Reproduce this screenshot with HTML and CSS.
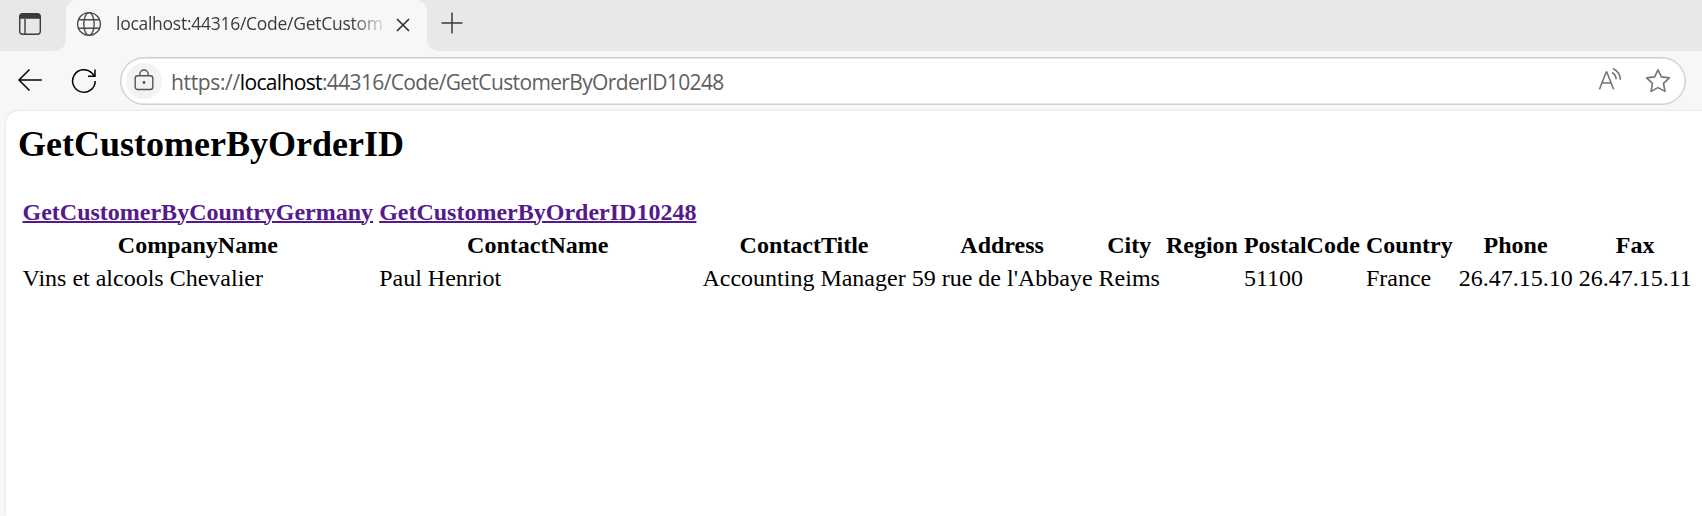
FILE: index.html
```html
<!DOCTYPE html>
<html lang="en">
<head>
<meta charset="utf-8">
<title>GetCustomerByOrderID</title>
<link rel="stylesheet" href="styles.css">
</head>
<body>
<div class="browser">
  <header class="tab-strip">
    <div class="tab-actions">
      <svg width="24" height="24" viewBox="0 0 24 24" fill="none" stroke="#3b3b3b" stroke-width="1.4"><rect x="1.7" y="1.7" width="20.6" height="20.6" rx="3.2"/><path d="M2 6V5a3 3 0 0 1 3-3h14a3 3 0 0 1 3 3v1z" fill="#3b3b3b"/><path d="M7 7v15"/></svg>
    </div>
    <div class="tab">
      <svg class="globe" width="26" height="26" viewBox="0 0 26 26" fill="none" stroke="#4b4b4b" stroke-width="1.4"><circle cx="13" cy="13" r="11.4"/><ellipse cx="13" cy="13" rx="5.2" ry="11.4"/><path d="M2.5 8.7h21M2.5 17.3h21"/></svg>
      <span class="tab-title">localhost:44316/Code/GetCustom</span>
      <svg class="close" width="14" height="14" viewBox="0 0 14 14" fill="none" stroke="#333" stroke-width="1.7"><path d="M1 1l12 12M13 1L1 13"/></svg>
    </div>
    <div class="new-tab">
      <svg width="22" height="22" viewBox="0 0 22 22" fill="none" stroke="#3b3b3b" stroke-width="1.5"><path d="M11 .5v21M.5 11h21"/></svg>
    </div>
  </header>
  <nav class="toolbar">
    <svg class="back" width="26" height="24" viewBox="0 0 26 24" fill="none" stroke="#000" stroke-width="1.5"><path d="M11.5 1.5L1 12l10.5 10.5M1 12H23.8"/></svg>
    <svg class="reload" width="26" height="26" viewBox="0 0 26 26" fill="none" stroke="#000" stroke-width="1.5"><path d="M24.2 13a11.3 11.3 0 1 1-3.3-8l2.6 3M24 1.5v6.7h-7"/></svg>
    <div class="address">
      <span class="lock"><svg width="20" height="22" viewBox="0 0 20 22" fill="none" stroke="#555" stroke-width="1.4"><rect x="1.2" y="6.7" width="17.6" height="13.8" rx="2.5"/><path d="M5.8 6.5V5.2a4.2 4.2 0 0 1 8.4 0v1.3"/><circle cx="10" cy="13.5" r="1.4" fill="#555" stroke="none"/></svg></span>
      <span class="url"><span class="scheme">https://</span><span class="host">localhost</span>:44316/Code/GetCustomerByOrderID10248</span>
      <svg class="read" width="24" height="24" viewBox="0 0 24 24" fill="none" stroke="#757575" stroke-width="1.6"><path d="M1.5 22.2L8.2 5h.6l6.8 17.2M3.9 16h9.2M14 5.5c2.5 1.4 4 4 4.2 6.8M15 1.5c4.4 2.2 7.2 6.4 7.4 11.3"/></svg>
      <svg class="star" width="26" height="26" viewBox="0 0 26 26" fill="none" stroke="#757575" stroke-width="1.6" stroke-linejoin="round"><path d="M13 1.8l3.4 7.1 8 1-5.9 5.5 1.5 8L13 19.6l-7 3.8 1.5-8L1.6 9.9l8-1z"/></svg>
    </div>
  </nav>
  <main class="page">
    <h2>GetCustomerByOrderID</h2>
    <table class="customers">
      <tbody>
        <tr><th><a href="#">GetCustomerByCountryGermany</a></th><th><a href="#">GetCustomerByOrderID10248</a></th></tr>
        <tr><th>CompanyName</th><th>ContactName</th><th>ContactTitle</th><th>Address</th><th>City</th><th>Region</th><th>PostalCode</th><th>Country</th><th>Phone</th><th>Fax</th></tr>
        <tr><td>Vins et alcools Chevalier</td><td>Paul Henriot</td><td>Accounting Manager</td><td>59 rue de l'Abbaye</td><td>Reims</td><td></td><td>51100</td><td>France</td><td>26.47.15.10</td><td>26.47.15.11</td></tr>
      </tbody>
    </table>
  </main>
</div>
</body>
</html>
```
FILE: styles.css
```css
* { box-sizing: border-box; }
body { margin: 0; overflow: hidden; background: #f7f7f7; }
svg { display: block; flex: none; }
.browser { height: 516px; display: flex; flex-direction: column; }

.tab-strip { height: 51px; display: flex; flex: none; background: #f7f7f7; }
.tab-actions { width: 66px; padding: 12px 0 0 18px; background: #e8e8e8; border-bottom-right-radius: 12px; }
.tab {
  width: 361px; display: flex; align-items: center; padding: 0 0 3px 10px;
  background: radial-gradient(circle at 12px 12px, #f7f7f7 12px, transparent 12.5px) 0 0 / 12px 12px no-repeat,
    radial-gradient(circle at 0 12px, #f7f7f7 12px, transparent 12.5px) 100% 0 / 12px 12px no-repeat,
    linear-gradient(#f7f7f7, #f7f7f7) 12px 0 / 337px 12px no-repeat,
    linear-gradient(#f7f7f7, #f7f7f7) 0 12px no-repeat, #e8e8e8;
}
.tab-title {
  width: 268px; margin: -2px 0 0 14px; overflow: hidden; white-space: nowrap;
  font: 17.5px/26px "Open Sans", "Noto Sans", sans-serif; letter-spacing: -0.27px; color: #3b3b3b;
  -webkit-mask-image: linear-gradient(90deg, #000 235px, transparent 272px);
  mask-image: linear-gradient(90deg, #000 235px, transparent 272px);
}
.close { margin: 2px 0 0 12px; }
.new-tab { flex: 1; padding: 12px 0 0 14px; background: #e8e8e8; border-bottom-left-radius: 12px; }

.toolbar { height: 60px; flex: none; display: flex; align-items: center; padding: 0 16px 0 18px; }
.back { margin-top: -2px; }
.reload { margin-left: 27px; }
.address {
  flex: 1; height: 48px; margin-left: 23px; display: flex; align-items: center;
  padding: 0 14px 0 4px; background: #fff; border: 1px solid #cecece; border-radius: 24px;
  box-shadow: inset 0 0 0 0.5px #cecece;
}
.lock { width: 36px; height: 36px; border-radius: 50%; background: #f3f3f3; display: flex; align-items: center; justify-content: center; padding-bottom: 2px; margin-left: 1px; }
.url { flex: 1; margin-left: 9px; padding-top: 1px; white-space: nowrap; font: 21px/30px "Open Sans", "Noto Sans", sans-serif; letter-spacing: -0.64px; color: #606060; }
.scheme { letter-spacing: -0.36px; }
.host { color: #000; }
.read { margin: -4px 23px 0 0; }

.page {
  flex: 1; margin-left: 6px; padding: 13px 0 0 12px; background: #fff;
  border-top-left-radius: 12px; box-shadow: 0 0 2px #c8c8c8; color: #000;
  font: 24px/27px "Liberation Serif", "Times New Roman", serif;
}
.page h2 { margin: 0 0 29px; font-size: 36px; line-height: 41px; font-weight: bold; }
.customers { border-spacing: 3px; white-space: nowrap; }
.customers th, .customers td { padding: 1.5px; }
.customers a { color: #551a8b; text-decoration: underline; text-decoration-thickness: 2px; }
```
